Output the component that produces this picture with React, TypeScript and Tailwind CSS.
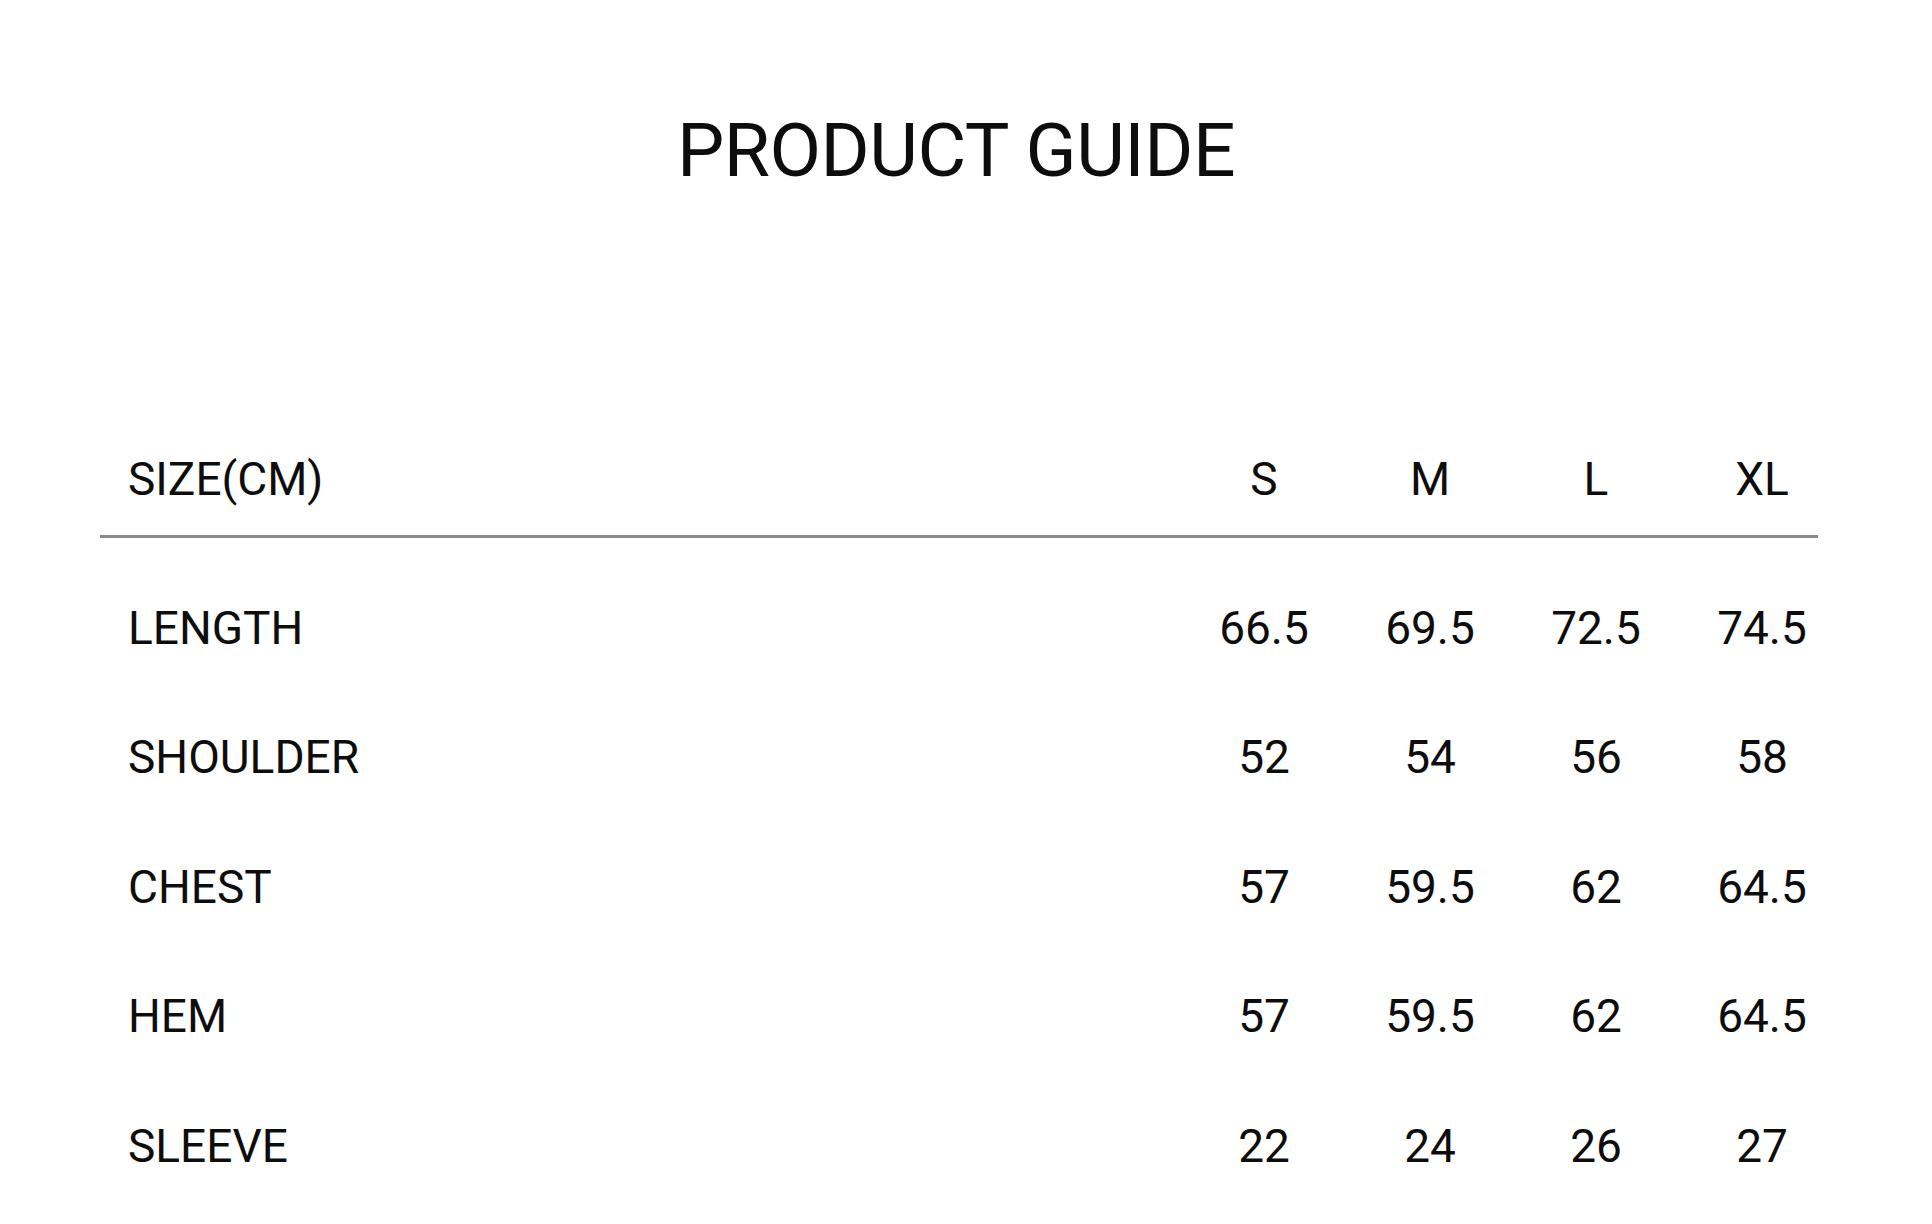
const sizes = ["S", "M", "L", "XL"];

const rows: { label: string; values: string[] }[] = [
  { label: "LENGTH", values: ["66.5", "69.5", "72.5", "74.5"] },
  { label: "SHOULDER", values: ["52", "54", "56", "58"] },
  { label: "CHEST", values: ["57", "59.5", "62", "64.5"] },
  { label: "HEM", values: ["57", "59.5", "62", "64.5"] },
  { label: "SLEEVE", values: ["22", "24", "26", "27"] },
];

function Row({ label, values, header }: { label: string; values: string[]; header?: boolean }) {
  return (
    <div className={`flex items-center ${header ? "h-[100px]" : "h-[129.5px]"}`}>
      <div className="flex-1 pl-[28px]">{label}</div>
      <div className="flex gap-[54px]">
        {values.map((v, i) => (
          <div key={i} className="w-[112px] text-center">
            {v}
          </div>
        ))}
      </div>
    </div>
  );
}

export default function App() {
  return (
    <div className="min-h-[1224px] w-full bg-white text-[#0d0d0d] font-['Roboto','Liberation_Sans',sans-serif]">
      <div className="ml-[100px] w-[1718px] pt-[113px]">
        <h1 className="pr-[6px] text-center text-[75px] font-normal leading-none tracking-[-0.5px]">PRODUCT GUIDE</h1>

        <div className="mt-[241px] text-[46px] leading-none">
          <Row label="SIZE(CM)" values={sizes} header />
          <div className="mt-[6px] h-[3px] bg-[#8a8a8a]" />
          <div className="mt-[25px]">
            {rows.map((r) => (
              <Row key={r.label} label={r.label} values={r.values} />
            ))}
          </div>
        </div>
      </div>
    </div>
  );
}
